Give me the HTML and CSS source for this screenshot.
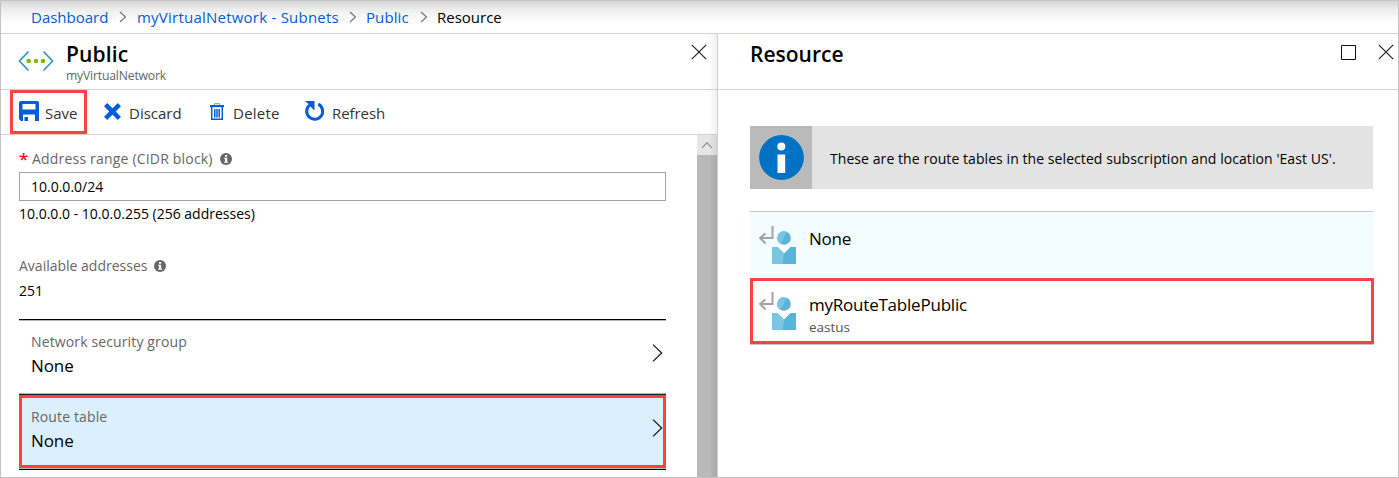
FILE: index.html
```html
<!DOCTYPE html>
<html lang="en">
<head>
<meta charset="utf-8">
<title>Resource</title>
<link rel="stylesheet" href="styles.css">
</head>
<body>
<svg class="defs" width="0" height="0">
  <symbol id="sep" viewBox="0 0 8 12"><path d="M1 1l5.500 5L1 11" fill="none" stroke="#777" stroke-width="1.200"/></symbol>
  <symbol id="close" viewBox="0 0 16 16"><path d="M.8.8l14.400 14.400M15.200.8L.8 15.200" fill="none" stroke="#222" stroke-width="1.200"/></symbol>
  <symbol id="chevron" viewBox="0 0 11 18"><path d="M1 .6l8.700 8.400L1 17.400" fill="none" stroke="#1b1b26" stroke-width="1.300"/></symbol>
  <symbol id="hint" viewBox="0 0 12 12"><circle cx="6" cy="6" r="6" fill="#666"/><path d="M5 2h2.200v1.700H5zM4 4.800h3.200v3.900h1v1H4v-1h1V5.800H4z" fill="#fff"/></symbol>
  <symbol id="route" viewBox="0 0 38 38">
    <path d="M13.500 0v12H1.500M6.500 7.500L1.100 12 6.500 17.500" fill="none" stroke="#a3a3a3" stroke-width="2"/>
    <circle cx="25" cy="12" r="6.800" fill="#59b4d9"/>
    <path d="M25 5.200a6.800 6.800 0 0 0-3.300 12.700L27.500 5.700A6.800 6.800 0 0 0 25 5.200z" fill="#7cc5e2"/>
    <path d="M13 21h5.500l6.500 6.500 6.500-6.500H37v17H13z" fill="#59b4d9"/>
    <path d="M13 21h5.500l6.500 6.500L23.600 38H13z" fill="#7cc5e2"/>
  </symbol>
</svg>
<div class="frame">
  <nav class="crumbs">
    <a class="crumb-dash">Dashboard</a><svg class="sep"><use href="#sep"/></svg>
    <a class="crumb-net">myVirtualNetwork - Subnets</a><svg class="sep"><use href="#sep"/></svg>
    <a class="crumb-public">Public</a><svg class="sep"><use href="#sep"/></svg>
    <span class="crumb-current">Resource</span>
  </nav>
  <main class="blades">
    <section class="blade subnet">
      <header class="blade-head">
        <svg class="subnet-icon" viewBox="0 0 36 22"><path d="M10.500 1.500L1.500 11l9 9.500M25.500 1.500l9 9.500-9 9.500" fill="none" stroke="#3999c6" stroke-width="1.800"/><g fill="#7fba00"><circle cx="10.700" cy="11" r="2.300"/><circle cx="18" cy="11" r="2.300"/><circle cx="25" cy="11" r="2.300"/></g></svg>
        <div class="titles"><h1 class="title-public">Public</h1><p class="subtitle">myVirtualNetwork</p></div>
        <svg class="close"><use href="#close"/></svg>
      </header>
      <div class="toolbar">
        <button class="tool save"><svg width="20" height="20" viewBox="0 0 20 20"><path fill-rule="evenodd" d="M2 0h16a2 2 0 0 1 2 2v18h-4v-6.500H4V20H2l-2-2V2a2 2 0 0 1 2-2zm1.500 3v5.500h13V3zM5.500 16H9v4H5.500z" fill="#015cda"/></svg><span>Save</span></button>
        <button class="tool discard"><svg width="17" height="17" viewBox="0 0 17 17"><path d="M1.600 1.600l13.800 13.800M15.400 1.600L1.600 15.400" stroke="#015cda" stroke-width="4.400"/></svg><span>Discard</span></button>
        <button class="tool delete"><svg width="14" height="18" viewBox="0 0 14 18"><path d="M4.500 1.800V.7h5v1.100" fill="none" stroke="#6593dc"/><path d="M0 2h14v2.200H0z" fill="#015cda"/><path d="M1.700 4v12.200h10.600V4M4.800 6v8.500M7 6v8.500M9.200 6v8.500" fill="none" stroke="#015cda" stroke-width="1.500"/></svg><span>Delete</span></button>
        <button class="tool refresh"><svg width="20" height="21" viewBox="0 0 20 21"><path d="M13.300 3.100a8 8 0 1 1-8.800 1" fill="none" stroke="#015cda" stroke-width="3"/><path d="M0 0h9.500v9.500L6.600 6.700 5 5 3.500 3z" fill="#015cda"/></svg><span>Refresh</span></button>
      </div>
      <div class="blade-body">
        <form class="fields">
          <label class="label range-label"><b>*</b><span>Address range (CIDR block)</span><svg class="hint"><use href="#hint"/></svg></label>
          <div class="input">10.0.0.0/24</div>
          <p class="range-note"><span>10.0.0.0 - 10.0.0.255 (256 addresses)</span></p>
          <div class="label available"><span>Available addresses</span><svg class="hint"><use href="#hint"/></svg></div>
          <p class="count">251</p>
          <div class="picker nsg"><div><p class="picker-label">Network security group</p><p class="picker-value">None</p></div><svg class="chevron"><use href="#chevron"/></svg></div>
          <div class="picker route-table"><div><p class="picker-label">Route table</p><p class="picker-value">None</p></div><svg class="chevron"><use href="#chevron"/></svg></div>
          <div class="end-line"></div>
        </form>
        <div class="scrollbar"><div class="scroll-up"><svg width="12" height="8" viewBox="0 0 12 8"><path d="M1 6.800l5-5 5 5" fill="none" stroke="#8a8a8a" stroke-width="1.200"/></svg></div></div>
      </div>
    </section>
    <section class="blade resource">
      <header class="blade-head">
        <h1 class="title-resource">Resource</h1>
        <svg class="maximize" viewBox="0 0 15 15"><path d="M.5.500h14v14H.5z" fill="none" stroke="#111"/></svg>
        <svg class="close"><use href="#close"/></svg>
      </header>
      <div class="resource-body">
        <div class="banner"><div class="banner-icon"><svg width="45" height="45" viewBox="0 0 45 45"><circle cx="22.500" cy="22.500" r="22.400" fill="#0072c6"/><circle cx="22.300" cy="11.500" r="4" fill="#fff"/><path d="M18.500 19.500h7.700V38h-7.700z" fill="#fff"/></svg></div><p><span>These are the route tables in the selected subscription and location 'East US'.</span></p></div>
        <ul class="options">
          <li class="option"><svg class="route-icon"><use href="#route"/></svg><div><p class="option-name">None</p></div></li>
          <li class="option chosen"><svg class="route-icon"><use href="#route"/></svg><div><p class="option-name">myRouteTablePublic</p><p class="option-place">eastus</p></div></li>
        </ul>
      </div>
    </section>
  </main>
</div>
</body>
</html>
```

FILE: styles.css
```css
* { box-sizing: border-box; }
body, h1, p, ul { margin: 0; padding: 0; }
body { font-family: "Open Sans", "Noto Sans", sans-serif; font-size: 14px; color: #111; background: #fff; overflow: hidden; }
.defs { position: absolute; }
svg { display: block; flex: none; }
p, h1, span, a, button { white-space: nowrap; }

.frame { width: 1399px; height: 478px; border: 1px solid #c3c3c3; display: flex; flex-direction: column; }
.crumbs { height: 33px; border-bottom: 1px solid #d2d2d2; padding-left: 30px; display: flex; align-items: center; font-size: 15px; background: linear-gradient(#d6d6d6 0, #ececec 8px, #fafafa 17px, #fff 24px); }
.crumbs a, .crumbs span { line-height: 32px; flex: none; }
.crumbs a { color: #015cda; }
.sep { width: 8px; height: 12px; }
.crumb-dash { width: 88px; }
.crumb-net { width: 212px; margin-left: 10px; letter-spacing: .23px; }
.crumb-public { width: 54px; margin-left: 9px; letter-spacing: .1px; }
.crumb-current { margin-left: 9px; color: #000; }

.blades { flex: 1; display: flex; min-height: 0; }
.blade { display: flex; flex-direction: column; }
.subnet { width: 717px; border-right: 1px solid #cfcfcf; background: linear-gradient(to left, #f0f0f0, #fff 8px); }
.resource { flex: 1; }
.blade-head { height: 56px; border-bottom: 1px solid #d2d2d2; display: flex; align-items: flex-start; }
h1 { font-weight: 600; font-size: 21px; line-height: 28px; color: #000; }
.title-public { letter-spacing: .15px; }
.close { width: 16px; height: 16px; margin: 10px 10px 0 0; }
.subnet-icon { width: 36px; height: 22px; margin: 16px 0 0 17px; }
.titles { flex: 1; padding: 6px 0 0 12px; }
.subtitle { font-size: 12.2px; line-height: 16px; letter-spacing: -.18px; color: #666; }
.title-resource { flex: 1; padding: 6px 0 0 32px; }
.maximize { width: 15px; height: 15px; margin: 11px 22px 0 0; }
.resource .close { margin-right: 4px; }

.toolbar { height: 45px; border-bottom: 1px solid #d2d2d2; display: flex; align-items: flex-start; padding-left: 9px; }
.tool { font: 15px/44px "Open Sans", "Noto Sans", sans-serif; height: 44px; border: 0; padding: 0; background: none; color: #333; display: flex; align-items: center; text-align: left; }
.tool span { padding-top: 1px; }
.tool svg { margin-top: -2px; }
.save { width: 77px; border: 3px solid #ff4141; padding-left: 6px; gap: 6px; }
.discard { margin-left: 17px; width: 106px; gap: 8px; }
.delete { width: 95px; gap: 9px; letter-spacing: .25px; }
.delete svg { margin-top: 0; }
.refresh { gap: 7px; letter-spacing: -.08px; }

.blade-body { flex: 1; display: flex; min-height: 0; }
.fields { width: 647px; margin: 13px 31px 0 18px; }
.label { display: flex; align-items: center; height: 20px; color: #666; font-size: 14px; }
.label b { width: 13px; color: #e81123; font-size: 17px; font-weight: 600; }
.range-label { letter-spacing: .19px; }
.hint { width: 12px; height: 12px; margin: 2px 0 0 7px; }
.input { height: 29px; margin-top: 4px; border: 1px solid #a3a3a3; padding-left: 11px; font-size: 14px; line-height: 27px; color: #000; background: #fff; }
.range-note { margin-top: 3px; line-height: 20px; color: #000; }
.available { margin-top: 31px; }
.count { margin-top: 6px; line-height: 20px; font-size: 14px; color: #000; }
.picker { display: flex; justify-content: space-between; }
.picker > div { padding-left: 12px; }
.picker-label { color: #666; font-size: 14px; line-height: 20px; letter-spacing: .13px; }
.picker-value { color: #000; font-size: 17px; line-height: 24px; margin-top: 2px; letter-spacing: -.1px; }
.nsg { height: 76px; margin-top: 18px; border-top: 1px solid #000; border-bottom: 1px solid #16232e; padding-top: 12px; box-shadow: inset 0 1px #b5b5b5, inset 0 -1px #b5b5b5; }
.chevron { width: 11px; height: 18px; margin: 12px 3px 0 0; }
.route-table { height: 73px; border: 3px solid #ff4141; background: #dcefff; padding-top: 9px; }
.route-table > div { padding-left: 9px; }
.route-table .chevron { margin-right: 0; }
.end-line { height: 2px; border-top: 1px solid #aabac6; border-bottom: 1px solid #000; }
.scrollbar { width: 20px; background: linear-gradient(to left, #a9a9a9, #b9b9b9 8px); }
.scroll-up { height: 20px; display: flex; align-items: center; justify-content: center; background: linear-gradient(to left, #d5d5d5, #e6e6e6 8px); }

.resource-body { padding: 36px 24px 0 32px; }
.banner { width: 623px; height: 63px; background: #e3e3e3; display: flex; align-items: center; }
.banner-icon { width: 62px; height: 63px; background: #bababa; display: flex; align-items: center; justify-content: center; }
.banner p { padding: 1px 0 0 18px; letter-spacing: .07px; color: #000; }
.options { list-style: none; width: 624px; margin-top: 22px; }
.option { display: flex; height: 67px; width: 623px; border-top: 1px solid #c2c6ca; background: #f3fcff; padding: 14px 0 0 9px; }
.option > div { padding-left: 12px; }
.option-name { font-size: 17px; line-height: 26px; letter-spacing: -.22px; color: #000; }
.option-place { font-size: 13.5px; line-height: 18px; color: #555; }
.route-icon { width: 38px; height: 38px; }
.chosen { width: 624px; height: 66px; border: 3px solid #ff4141; background: #fff; padding: 11px 0 0 6px; box-shadow: 0 1px #c6c6c6; }
```
